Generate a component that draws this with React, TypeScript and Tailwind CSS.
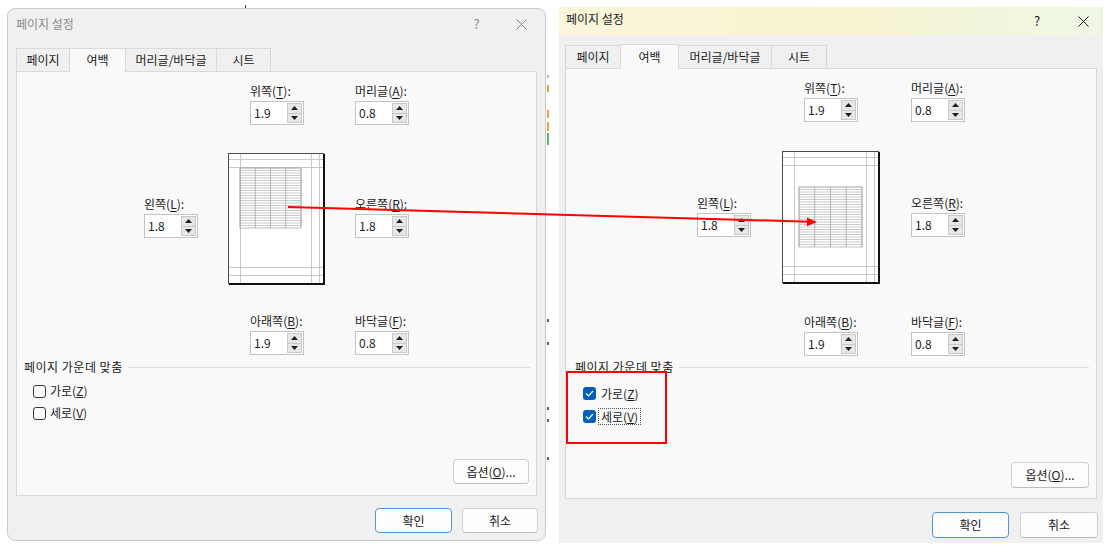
import React from 'react';

type Variant = 'L' | 'R';

const Up = () => (
  <svg width="7" height="4" viewBox="0 0 7 4">
    <polygon points="0,4 3.5,0 7,4" fill="#1f1f1f" />
  </svg>
);

const Down = () => (
  <svg width="7" height="4" viewBox="0 0 7 4">
    <polygon points="0,0 3.5,4 7,0" fill="#1f1f1f" />
  </svg>
);

const Spin = ({ label, k, value }: { label: string; k: string; value: string }) => (
  <div className="flex flex-col gap-[2px]">
    <span className="whitespace-nowrap text-[12px] leading-[16px] text-[#1b1b1b]">
      {label}(<u className="underline-offset-[2px]">{k}</u>):
    </span>
    <div className="flex h-[24px] w-[54px] border border-[#c3c3c3] bg-white">
      <span className="flex-1 pl-[3px] text-[12px] leading-[22px] text-[#1b1b1b]">{value}</span>
      <div className="flex w-[16px] flex-col py-[1px] pr-[1px]">
        <div className="flex flex-1 items-center justify-center border border-[#c9c9c9] bg-[#e7e7e7]">
          <Up />
        </div>
        <div className="flex flex-1 items-center justify-center border border-t-0 border-[#c9c9c9] bg-[#e7e7e7]">
          <Down />
        </div>
      </div>
    </div>
  </div>
);

// page preview: border, margin lines and the little sheet grid
const Preview = ({ v }: { v: Variant }) => {
  const w = v === 'L' ? 97 : 98;
  const h = v === 'L' ? 132 : 133;
  const t = v === 'L' ? { x: 12, y: 15, w: 61, h: 60 } : { x: 17, y: 36, w: 63, h: 60 };
  const rows = Array.from({ length: 24 }, (_, i) => t.y + (i * t.h) / 24);
  const cols = Array.from({ length: 5 }, (_, i) => t.x + (i * t.w) / 4);
  return (
    <svg width={w} height={h} viewBox={`0 0 ${w} ${h}`} className="block">
      <rect x="0.5" y="0.5" width={w - 2} height={h - 2} fill="#ffffff" stroke="#4a4a4a" />
      <line x1={w - 1} y1="1" x2={w - 1} y2={h} stroke="#111" strokeWidth="2" />
      <line x1="1" y1={h - 1} x2={w} y2={h - 1} stroke="#111" strokeWidth="2" />
      <line x1="12.5" y1="1" x2="12.5" y2={h - 2} stroke="#c8c8c8" />
      <line x1={w - 13.5} y1="1" x2={w - 13.5} y2={h - 2} stroke="#c8c8c8" />
      <line x1={w - 5.5} y1="1" x2={w - 5.5} y2={h - 2} stroke="#c8c8c8" />
      <line x1="1" y1="6.5" x2={w - 2} y2="6.5" stroke="#c8c8c8" />
      <line x1="1" y1="14.5" x2={w - 2} y2="14.5" stroke="#c8c8c8" />
      <line x1="1" y1={h - 17.5} x2={w - 2} y2={h - 17.5} stroke="#c8c8c8" />
      <line x1="1" y1={h - 9.5} x2={w - 2} y2={h - 9.5} stroke="#c8c8c8" />
      {rows.map((y, i) => (
        <line key={'r' + i} x1={t.x} y1={y} x2={t.x + t.w} y2={y} stroke="#a8a8a8" strokeWidth="0.6" />
      ))}
      {cols.map((x, i) => (
        <line key={'c' + i} x1={x} y1={t.y} x2={x} y2={t.y + t.h} stroke="#a8a8a8" strokeWidth="0.8" />
      ))}
      <rect x={t.x} y={t.y} width={t.w} height={t.h} fill="none" stroke="#b0b0b0" strokeWidth="0.8" />
    </svg>
  );
};

const Check = ({ on }: { on: boolean }) =>
  on ? (
    <span className="flex h-[13px] w-[13px] items-center justify-center rounded-[3px] bg-[#005fb8]">
      <svg width="9" height="7" viewBox="0 0 9 7">
        <polyline points="1,3.5 3.5,6 8,1" fill="none" stroke="#fff" strokeWidth="1.2" />
      </svg>
    </span>
  ) : (
    <span className="h-[13px] w-[13px] rounded-[3px] border border-[#3a3a3a] bg-[#fbfbfb]" />
  );

const CloseIcon = () => (
  <svg width="11" height="11" viewBox="0 0 11 11">
    <path d="M0.5 0.5 L10.5 10.5 M10.5 0.5 L0.5 10.5" stroke="currentColor" strokeWidth="1" />
  </svg>
);

const tabsL = [
  { label: '페이지', cls: 'w-[54px] h-[23px]' },
  { label: '여백', cls: 'w-[57px] h-[24px]', active: true },
  { label: '머리글/바닥글', cls: 'w-[92px] h-[23px]' },
  { label: '시트', cls: 'w-[55px] h-[23px]' },
];

const tabsR = [
  { label: '페이지', cls: 'w-[56px] h-[23px]' },
  { label: '여백', cls: 'w-[59px] h-[25px]', active: true },
  { label: '머리글/바닥글', cls: 'w-[94px] h-[23px]' },
  { label: '시트', cls: 'w-[56px] h-[23px]' },
];

const Dialog = ({ v }: { v: Variant }) => {
  const L = v === 'L';
  const tabs = L ? tabsL : tabsR;
  return (
    <div
      className={
        L
          ? 'absolute left-[7px] top-[8px] flex h-[533px] w-[539px] flex-col rounded-[8px] border border-[#cbcbcb] bg-[#f0f0f0]'
          : 'absolute left-[559px] top-[7px] flex h-[536px] w-[544px] flex-col bg-[#f0f0f0]'
      }
    >
      {/* title bar */}
      {L ? (
        <div className="flex h-[30px] items-center text-[#8a8a8a]">
          <span className="flex-1 pl-[8px] text-[12px]">페이지 설정</span>
          <span className="w-[46px] pl-[3px] text-center text-[13px]">?</span>
          <span className="mr-px flex w-[46px] justify-center">
            <CloseIcon />
          </span>
        </div>
      ) : (
        <div className="flex h-[28px] items-start bg-gradient-to-r from-[#f9f6dc] via-[#f8f3cf] to-[#eef7e5] text-[#1b1b1b]">
          <span className="flex-1 pl-[7px] pt-[4px] text-[12px] leading-[16px]">페이지 설정</span>
          <span className="w-[52px] pt-[5px] text-center text-[13px] leading-[18px]">?</span>
          <span className="flex w-[40px] justify-center pt-[9px]">
            <CloseIcon />
          </span>
        </div>
      )}

      <div className={L ? 'px-[8px] pt-[8px]' : 'px-[6px] pt-[8px]'}>
        {/* tabs */}
        <div className={L ? 'flex h-[24px] items-end' : 'flex h-[25px] items-end'}>
          {tabs.map((t, i) => (
            <div
              key={t.label}
              className={
                'flex items-center justify-center border border-b-0 border-[#d9d9d9] text-[12px] text-[#1b1b1b] ' +
                t.cls +
                (i > 0 ? ' -ml-px' : '') +
                (t.active ? ' relative z-10 -mb-px bg-[#f9f9f9] pb-[1px]' : ' bg-[#f0f0f0]')
              }
            >
              {t.label}
            </div>
          ))}
        </div>

        {/* tab panel */}
        <div
          className={
            L
              ? 'flex h-[425px] flex-col border border-[#d9d9d9] bg-[#f9f9f9]'
              : 'flex h-[431px] flex-col border border-[#d9d9d9] bg-[#f9f9f9]'
          }
        >
          <div
            className={
              L
                ? 'grid grid-cols-[54px_97px_54px] gap-x-[30px] pl-[127px] pt-[11px]'
                : 'grid grid-cols-[54px_98px_54px] gap-x-[31px] pl-[131px] pt-[11px]'
            }
          >
            <div />
            <div className="pl-[22px]">
              <Spin label="위쪽" k="T" value="1.9" />
            </div>
            <Spin label="머리글" k="A" value="0.8" />

            <div className={L ? 'mt-[24px] self-center' : 'mt-[26px] self-center'}>
              <Spin label="왼쪽" k="L" value="1.8" />
            </div>
            <div className={L ? 'mt-[28px]' : 'mt-[29px]'}>
              <Preview v={v} />
            </div>
            <div className={L ? 'mt-[24px] self-center' : 'mt-[26px] self-center'}>
              <Spin label="오른쪽" k="R" value="1.8" />
            </div>

            <div />
            <div className={L ? 'mt-[28px] pl-[22px]' : 'mt-[30px] pl-[22px]'}>
              <Spin label="아래쪽" k="B" value="1.9" />
            </div>
            <div className={L ? 'mt-[28px]' : 'mt-[30px]'}>
              <Spin label="바닥글" k="F" value="0.8" />
            </div>
          </div>

          {/* center on page */}
          <div className={L ? 'mt-[4px] flex h-[16px] items-center pl-[7px] pr-[6px]' : 'mt-[3px] flex h-[16px] items-center pl-[9px] pr-[7px]'}>
            <span className="text-[12px] leading-[16px] tracking-[0.5px] text-[#1b1b1b]">페이지 가운데 맞춤</span>
            <div className="ml-[5px] h-px flex-1 bg-[#dedede]" />
          </div>
          <div className={L ? 'mt-[5px] flex flex-col pl-[16px]' : 'mt-[7px] flex flex-col pl-[17px]'}>
            <div className={L ? 'flex h-[22px] items-center gap-[4px]' : 'flex h-[23px] items-center gap-[5px]'}>
              <Check on={!L} />
              <span className="text-[12px] leading-[16px] text-[#1b1b1b]">
                가로(<u>Z</u>)
              </span>
            </div>
            <div className={L ? 'flex h-[22px] items-center gap-[4px]' : 'flex h-[23px] items-center gap-[2px]'}>
              <Check on={!L} />
              <span
                className={
                  L
                    ? 'text-[12px] leading-[16px] text-[#1b1b1b]'
                    : 'border border-dotted border-[#555] px-[2px] text-[12px] leading-[15px] text-[#1b1b1b]'
                }
              >
                세로(<u>V</u>)
              </span>
            </div>
          </div>

          <div className={L ? 'flex flex-1 items-end justify-end pb-[11px] pr-[7px]' : 'flex flex-1 items-end justify-end pb-[10px] pr-[7px]'}>
            <button
              className={
                (L ? 'h-[25px] w-[76px]' : 'h-[26px] w-[78px]') +
                ' rounded-[4px] border border-[#d0d0d0] border-b-[#bdbdbd] bg-[#fdfdfd] text-[12px] text-[#1b1b1b]'
              }
            >
              옵션(<u>O</u>)...
            </button>
          </div>
        </div>
      </div>

      {/* dialog buttons */}
      <div className={L ? 'flex justify-end gap-[10px] pr-[7px] pt-[12px]' : 'flex justify-end gap-[11px] pr-[5px] pt-[13px]'}>
        <button
          className={
            (L ? 'h-[25px] w-[77px]' : 'h-[26px] w-[77px]') +
            ' rounded-[4px] border border-[#4f94d8] bg-[#fdfdfd] text-[12px] text-[#1b1b1b]'
          }
        >
          확인
        </button>
        <button
          className={
            (L ? 'h-[25px] w-[76px]' : 'h-[26px] w-[78px]') +
            ' rounded-[4px] border border-[#d0d0d0] border-b-[#bdbdbd] bg-[#fdfdfd] text-[12px] text-[#1b1b1b]'
          }
        >
          취소
        </button>
      </div>
    </div>
  );
};

export default function App() {
  return (
    <div className="relative h-[548px] w-[1113px] overflow-hidden bg-white font-['Noto_Sans_CJK_KR','Noto_Sans',sans-serif]">
      {/* bits of the sheet behind the dialogs */}
      <div className="absolute left-[245px] top-[5px] h-[4px] w-px bg-[#444]" />
      <div className="absolute left-[547px] top-[75px] h-[3px] w-[2px] bg-[#9ec3e6]" />
      <div className="absolute left-[547px] top-[85px] h-[7px] w-[2px] bg-[#e8a33c]" />
      <div className="absolute left-[547px] top-[110px] h-[8px] w-[2px] bg-[#e8a33c]" />
      <div className="absolute left-[547px] top-[122px] h-[9px] w-[2px] bg-[#e8a33c]" />
      <div className="absolute left-[547px] top-[133px] h-[12px] w-[2px] bg-[#5fb36b]" />
      <div className="absolute left-[547px] top-[319px] h-[3px] w-[2px] bg-[#666]" />
      <div className="absolute left-[547px] top-[342px] h-[3px] w-[2px] bg-[#666]" />
      <div className="absolute left-[547px] top-[407px] h-[3px] w-[2px] bg-[#666]" />
      <div className="absolute left-[547px] top-[419px] h-[3px] w-[2px] bg-[#666]" />
      <div className="absolute left-[547px] top-[457px] h-[3px] w-[2px] bg-[#666]" />

      <Dialog v="L" />
      <Dialog v="R" />

      {/* annotation: arrow and highlight box */}
      <svg className="pointer-events-none absolute left-0 top-0 z-20" width="1113" height="548" viewBox="0 0 1113 548">
        <line x1="288" y1="207" x2="809" y2="221.7" stroke="#ff0000" strokeWidth="2" />
        <polygon points="817,222 807,217.5 807,226.3" fill="#ff0000" />
        <rect x="567" y="372" width="99" height="71" fill="none" stroke="#ff0000" strokeWidth="2" />
      </svg>
    </div>
  );
}
